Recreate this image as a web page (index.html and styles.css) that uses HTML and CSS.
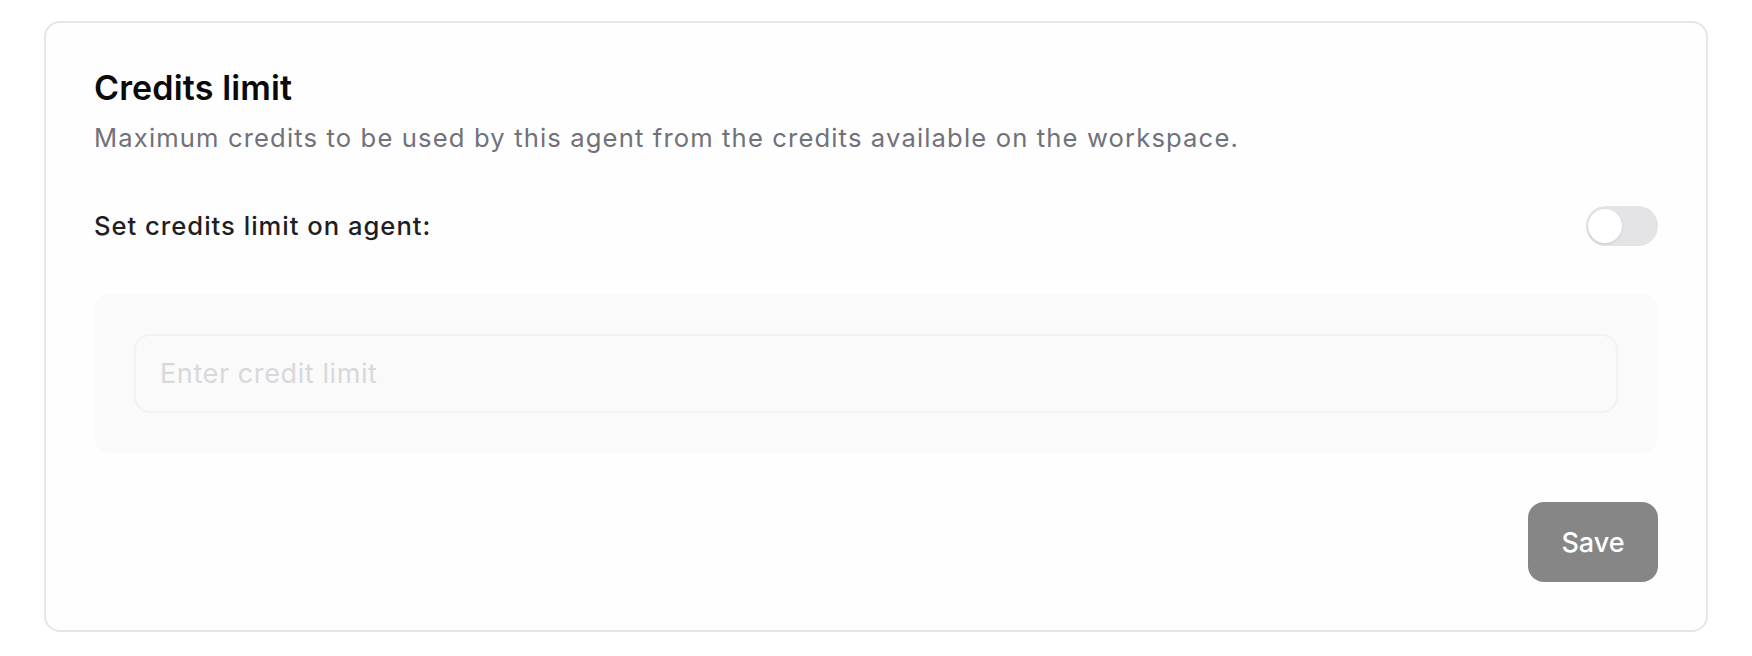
FILE: index.html
```html
<!DOCTYPE html>
<html>
<head>
    <title>Credits limit</title>
    <link rel="stylesheet" href="styles.css">
</head>
<body>
    <div class="page">
        <div class="card">
            <h2 class="card-title">Credits limit</h2>
            <p class="card-desc">Maximum credits to be used by this agent from the credits available on the workspace.</p>

            <div class="setting-row">
                <span class="setting-label">Set credits limit on agent:</span>
                <button class="toggle" type="button" aria-pressed="false">
                    <span class="toggle-knob"></span>
                </button>
            </div>

            <div class="limit-box">
                <input type="text" class="limit-input" placeholder="Enter credit limit" disabled>
            </div>

            <div class="actions">
                <button class="btn-save" type="button">Save</button>
            </div>
        </div>
    </div>
</body>
</html>
```

FILE: styles.css
```css
* {
    margin: 0;
    padding: 0;
    box-sizing: border-box;
}

body {
    font-family: Inter, 'Noto Sans', sans-serif;
    background: #ffffff;
    color: #0a0a0a;
}

.page {
    padding: 21px 44px 0 44px;
}

.card {
    display: flex;
    flex-direction: column;
    border: 2px solid #e6e6e6;
    border-radius: 16px;
    padding: 45px 48px 48px 48px;
    background: #fefefe;
}

.card-title {
    font-size: 34px;
    line-height: 40px;
    font-weight: 600;
    letter-spacing: 0.15px;
    color: #0a0a0a;
}

.card-desc {
    margin-top: 12px;
    font-size: 25.6px;
    line-height: 36px;
    letter-spacing: 1.14px;
    color: #71717a;
}

.setting-row {
    display: flex;
    align-items: center;
    justify-content: space-between;
    margin-top: 50px;
    height: 40px;
}

.setting-label {
    font-size: 25.6px;
    line-height: 36px;
    font-weight: 500;
    letter-spacing: 1px;
    color: #1f1f23;
}

.toggle {
    position: relative;
    width: 72px;
    height: 40px;
    border: none;
    border-radius: 20px;
    background: #e4e4e7;
    cursor: pointer;
}

.toggle-knob {
    position: absolute;
    top: 3px;
    left: 2px;
    width: 34px;
    height: 34px;
    border-radius: 50%;
    background: #ffffff;
    box-shadow: 0 1px 3px rgba(0,0,0,0.12);
}

.limit-box {
    margin-top: 48px;
    padding: 40px;
    background: #fafafa;
    border-radius: 16px;
}

.limit-input {
    display: block;
    width: 100%;
    height: 79px;
    padding: 0 24px;
    border: 2px solid #f2f2f2;
    border-radius: 16px;
    background: #fafafa;
    font-family: Inter, 'Noto Sans', sans-serif;
    font-size: 27px;
    letter-spacing: 0.6px;
    color: #3f3f46;
}

.limit-input::placeholder {
    color: #d8d8db;
}

.limit-input:focus {
    outline: none;
}

.actions {
    display: flex;
    justify-content: flex-end;
    margin-top: 49px;
}

.btn-save {
    width: 130px;
    height: 80px;
    border: none;
    border-radius: 16px;
    background: #868686;
    color: #ffffff;
    font-family: Inter, 'Noto Sans', sans-serif;
    font-size: 27px;
    font-weight: 500;
    cursor: pointer;
}
```
